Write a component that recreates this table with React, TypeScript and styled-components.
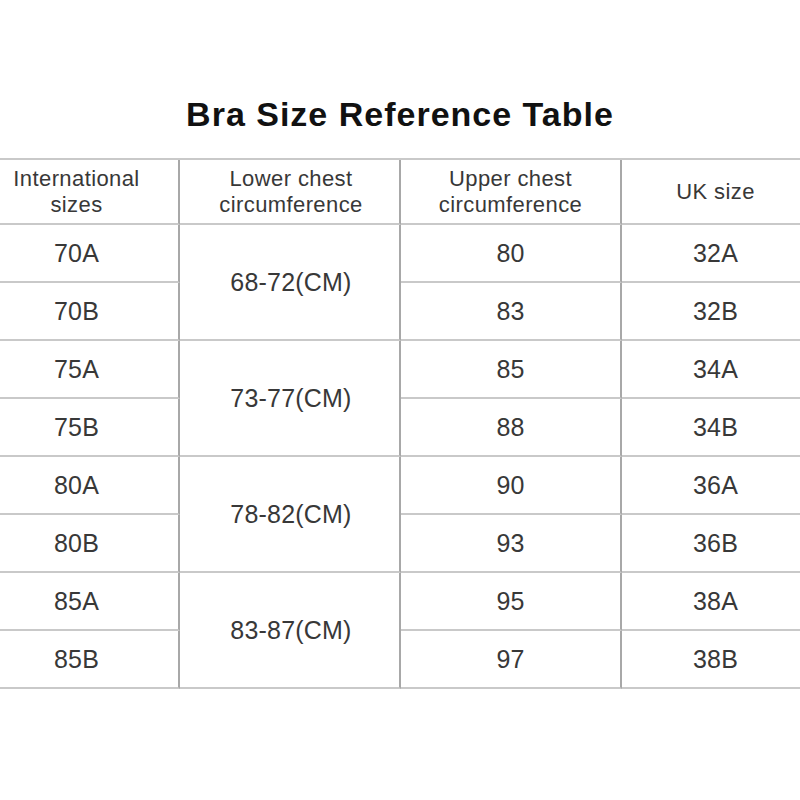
import React from "react";
import styled, { createGlobalStyle } from "styled-components";

const GlobalStyle = createGlobalStyle`
  html, body {
    margin: 0;
    padding: 0;
    background: #ffffff;
  }
  body {
    font-family: "Liberation Sans", Arial, sans-serif;
  }
`;

const Page = styled.div`
  width: 800px;
  height: 800px;
  background: #ffffff;
  padding-top: 94px;
  box-sizing: border-box;
`;

const Title = styled.h1`
  margin: 0;
  height: 40px;
  line-height: 40px;
  font-size: 34px;
  font-weight: 700;
  letter-spacing: 1px;
  text-align: center;
  color: #111111;
`;

const Table = styled.div`
  margin-top: 24px;
  display: grid;
  grid-template-columns: 180px 221px 221px 1fr;
  grid-template-rows: 65px repeat(8, 58px);
  border-top: 2px solid #c9c9c9;
`;

type CellProps = {
  $span?: number;
  $col?: 1 | 2 | 3 | 4;
  $header?: boolean;
};

const Cell = styled.div<CellProps>`
  box-sizing: border-box;
  display: flex;
  align-items: center;
  justify-content: center;
  text-align: center;
  color: #383838;
  border-bottom: 2px solid #c9c9c9;
  border-right: ${(p) => (p.$col === 4 ? "none" : "2px solid #a8a8a8")};
  padding-right: ${(p) => (p.$col === 1 ? "25px" : "0")};
  padding-left: ${(p) => (p.$col === 4 ? "9px" : p.$col === 2 ? "3px" : "0")};
  grid-row: ${(p) => (p.$span ? `span ${p.$span}` : "auto")};
  font-size: ${(p) => (p.$header ? "22px" : "25px")};
  line-height: ${(p) => (p.$header ? "26px" : "30px")};
  letter-spacing: ${(p) => (p.$header ? "0.4px" : "0.2px")};
`;

const groups = [
  { lower: "68-72(CM)", rows: [["70A", "80", "32A"], ["70B", "83", "32B"]] },
  { lower: "73-77(CM)", rows: [["75A", "85", "34A"], ["75B", "88", "34B"]] },
  { lower: "78-82(CM)", rows: [["80A", "90", "36A"], ["80B", "93", "36B"]] },
  { lower: "83-87(CM)", rows: [["85A", "95", "38A"], ["85B", "97", "38B"]] },
];

export default function App() {
  return (
    <>
      <GlobalStyle />
      <Page>
        <Title>Bra Size Reference Table</Title>
        <Table>
          <Cell $header $col={1}>
            International
            <br />
            sizes
          </Cell>
          <Cell $header $col={2}>
            Lower chest
            <br />
            circumference
          </Cell>
          <Cell $header $col={3}>
            Upper chest
            <br />
            circumference
          </Cell>
          <Cell $header $col={4}>
            UK size
          </Cell>
          {groups.map((g) => (
            <React.Fragment key={g.lower}>
              <Cell $col={1}>{g.rows[0][0]}</Cell>
              <Cell $col={2} $span={2}>
                {g.lower}
              </Cell>
              <Cell $col={3}>{g.rows[0][1]}</Cell>
              <Cell $col={4}>{g.rows[0][2]}</Cell>
              <Cell $col={1}>{g.rows[1][0]}</Cell>
              <Cell $col={3}>{g.rows[1][1]}</Cell>
              <Cell $col={4}>{g.rows[1][2]}</Cell>
            </React.Fragment>
          ))}
        </Table>
      </Page>
    </>
  );
}
